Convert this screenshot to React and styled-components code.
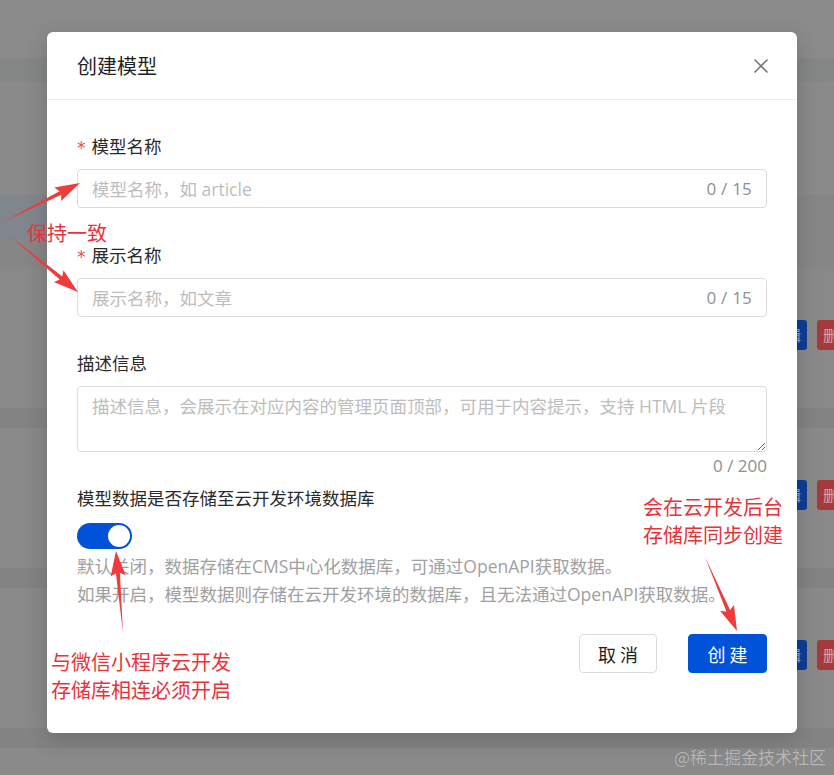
import React from "react";
import styled, { createGlobalStyle } from "styled-components";

const Global = createGlobalStyle`
  html, body { margin: 0; padding: 0; }
  body {
    width: 834px; height: 775px; overflow: hidden;
    font-family: "Open Sans", "Noto Sans CJK SC", sans-serif;
  }
  * { box-sizing: border-box; }
`;

const Screen = styled.div`
  position: relative;
  width: 834px;
  height: 775px;
  overflow: hidden;
  background: #8a8a8a;
`;

/* ---------- dimmed page behind the dialog ---------- */
const Behind = styled.div`
  display: flex;
  flex-direction: column;
  height: 100%;
`;
const TopBar = styled.div`
  height: 58px;
  background: #8b8b8b;
`;
const SubBar = styled.div`
  height: 24px;
  background: #858686;
`;
const Upper = styled.div`
  height: 186px;
  display: grid;
  grid-template-columns: 47px 1fr 37px;
  grid-template-rows: 113px 45px 1fr;
`;
const Cell = styled.div`
  background: ${(p) => p.$bg || "transparent"};
  grid-column: ${(p) => p.$col || "auto"};
  grid-row: ${(p) => p.$row || "auto"};
`;
const Row = styled.div`
  height: 160px;
  display: flex;
  flex-direction: column;
`;
const RowBody = styled.div`
  flex: 1;
  display: flex;
  justify-content: flex-end;
  align-items: flex-start;
  padding-top: 52px;
  gap: 10px;
  margin-right: -25px;
  background: #898989;
`;
const RowSep = styled.div`
  height: 20px;
  background: #838383;
`;
const DimBtn = styled.div`
  width: 42px;
  height: 30px;
  border-radius: 3px;
  background: ${(p) => (p.$danger ? "#a63a3a" : "#0c3d98")};
  color: rgba(255, 255, 255, 0.55);
  font-size: 15px;
  line-height: 30px;
  text-align: center;
  font-family: "Noto Sans CJK SC", sans-serif;
`;

/* ---------- dialog ---------- */
const Overlay = styled.div`
  position: absolute;
  inset: 0;
  padding: 32px 0 0 47px;
`;
const Modal = styled.div`
  width: 750px;
  height: 701px;
  background: #fff;
  border-radius: 6px;
  box-shadow: 0 6px 22px rgba(0, 0, 0, 0.18);
  display: flex;
  flex-direction: column;
`;
const Header = styled.div`
  height: 68px;
  padding: 0 26px 0 30px;
  display: flex;
  align-items: center;
  justify-content: space-between;
  border-bottom: 1px solid #ededed;
`;
const Title = styled.div`
  font-family: "Noto Sans CJK SC", sans-serif;
  font-size: 20px;
  color: #1f1f1f;
  line-height: 28px;
`;
const Close = styled.button`
  border: 0;
  background: none;
  padding: 0;
  width: 20px;
  height: 20px;
  display: flex;
  color: #7a7a7a;
  cursor: pointer;
`;
const Body = styled.div`
  flex: 1;
  padding: 33px 30px 0 30px;
  display: flex;
  flex-direction: column;
`;
const Field = styled.div`
  display: flex;
  flex-direction: column;
  gap: ${(p) => p.$gap || 10}px;
  margin-bottom: ${(p) => p.$mb || 0}px;
`;
const Label = styled.div`
  font-family: "Noto Sans CJK SC", sans-serif;
  font-size: 17.5px;
  line-height: 26px;
  color: #2a2a2a;
  display: flex;
  align-items: center;
`;
const Star = styled.span`
  color: #e34d59;
  font-size: 17px;
  margin-right: 6px;
  font-family: "DejaVu Sans", sans-serif;
  position: relative;
  top: 2px;
`;
const InputBox = styled.div`
  height: 39px;
  border: 1px solid #dcdcdc;
  border-radius: 4px;
  display: flex;
  align-items: center;
  padding: 0 14px 0 14px;
`;
const Input = styled.input`
  flex: 1;
  border: 0;
  outline: none;
  font-family: "Open Sans", "Noto Sans CJK SC", sans-serif;
  font-size: 17.5px;
  color: #222;
  background: transparent;
  padding: 0;
  &::placeholder { color: #bdbdbd; }
`;
const Counter = styled.span`
  font-family: "Open Sans", sans-serif;
  font-size: 17px;
  color: #8f8f8f;
  letter-spacing: 0.2px;
`;
const TextArea = styled.textarea`
  width: 100%;
  height: 66px;
  border: 1px solid #dcdcdc;
  border-radius: 4px;
  padding: 6px 14px;
  font-family: "Open Sans", "Noto Sans CJK SC", sans-serif;
  font-size: 17.5px;
  line-height: 26px;
  resize: vertical;
  outline: none;
  display: block;
  &::placeholder { color: #bdbdbd; }
`;
const AreaCount = styled.div`
  text-align: right;
  font-family: "Open Sans", sans-serif;
  font-size: 17px;
  line-height: 24px;
  color: #8f8f8f;
  margin-top: 2px;
`;
const Switch = styled.div`
  width: 55px;
  height: 26px;
  border-radius: 13px;
  background: #0052d9;
  display: flex;
  align-items: center;
  justify-content: flex-end;
  padding: 0 2px;
`;
const Knob = styled.div`
  width: 22px;
  height: 22px;
  border-radius: 50%;
  background: #fff;
`;
const Help = styled.div`
  font-family: "Open Sans", "Noto Sans CJK SC", sans-serif;
  font-size: 17.5px;
  line-height: 28px;
  color: #a0a0a0;
  margin-top: 3px;
`;
const Footer = styled.div`
  display: flex;
  justify-content: flex-end;
  gap: 31px;
  margin-top: 26px;
`;
const Button = styled.button`
  height: 39px;
  width: ${(p) => (p.$primary ? 79 : 78)}px;
  border-radius: 4px;
  border: 1px solid ${(p) => (p.$primary ? "#0052d9" : "#dcdcdc")};
  background: ${(p) => (p.$primary ? "#0052d9" : "#fff")};
  color: ${(p) => (p.$primary ? "#fff" : "#1f1f1f")};
  font-family: "Noto Sans CJK SC", sans-serif;
  font-size: 18px;
  letter-spacing: 4px;
  padding: 0 0 0 4px;
  cursor: pointer;
`;

/* ---------- annotations ---------- */
const Notes = styled.svg`
  position: absolute;
  inset: 0;
  pointer-events: none;
`;
const Note = styled.div`
  position: absolute;
  left: ${(p) => p.$x}px;
  top: ${(p) => p.$y}px;
  color: #e8333a;
  font-family: "Noto Sans CJK SC", sans-serif;
  font-size: 20px;
  line-height: 28px;
  white-space: nowrap;
  pointer-events: none;
`;
const Watermark = styled.div`
  position: absolute;
  right: 8px;
  bottom: 6px;
  font-family: "Noto Sans CJK SC", sans-serif;
  font-size: 17px;
  color: #b7b7b7;
  text-shadow: 0 0 1px rgba(0, 0, 0, 0.15);
`;

function arrowPoints(tx, ty, px, py, hl = 22, hw = 15, sw = 4) {
  const dx = px - tx, dy = py - ty;
  const len = Math.hypot(dx, dy);
  const ux = dx / len, uy = dy / len;
  const nx = -uy, ny = ux;
  const bx = px - ux * hl, by = py - uy * hl;
  const wx = bx - ux * 3, wy = by - uy * 3;
  const pts = [
    [tx, ty],
    [bx + (nx * sw) / 2, by + (ny * sw) / 2],
    [wx + (nx * hw) / 2, wy + (ny * hw) / 2],
    [px, py],
    [wx - (nx * hw) / 2, wy - (ny * hw) / 2],
    [bx - (nx * sw) / 2, by - (ny * sw) / 2],
  ];
  return pts.map((p) => p.join(",")).join(" ");
}

const arrows = [
  [3, 222, 80, 183],
  [10, 236, 78, 292],
  [123, 633, 116, 551],
  [705, 557, 737, 631],
];

export default function App() {
  return (
    <Screen>
      <Global />
      <Behind>
        <TopBar />
        <SubBar />
        <Upper>
          <Cell $col="1 / 4" $row="1" $bg="#8a8a8a" />
          <Cell $col="1" $row="2" $bg="#80868c" />
          <Cell $col="2 / 4" $row="2" $bg="#868686" />
          <Cell $col="1 / 4" $row="3" $bg="#868686" />
        </Upper>
        {[0, 1, 2].map((i) => (
          <Row key={i}>
            <RowBody>
              <DimBtn>编辑</DimBtn>
              <DimBtn $danger>删除</DimBtn>
            </RowBody>
            <RowSep />
          </Row>
        ))}
      </Behind>

      <Overlay>
        <Modal>
          <Header>
            <Title>创建模型</Title>
            <Close aria-label="close">
              <svg width="20" height="20" viewBox="0 0 20 20">
                <path d="M3.5 3.5 L16.5 16.5 M16.5 3.5 L3.5 16.5" stroke="currentColor" strokeWidth="1.6" fill="none" />
              </svg>
            </Close>
          </Header>
          <Body>
            <Field $mb={34}>
              <Label><Star>*</Star>模型名称</Label>
              <InputBox>
                <Input placeholder="模型名称，如 article" />
                <Counter>0 / 15</Counter>
              </InputBox>
            </Field>
            <Field $mb={33}>
              <Label><Star>*</Star>展示名称</Label>
              <InputBox>
                <Input placeholder="展示名称，如文章" />
                <Counter>0 / 15</Counter>
              </InputBox>
            </Field>
            <Field $mb={7}>
              <Label>描述信息</Label>
              <div>
                <TextArea placeholder="描述信息，会展示在对应内容的管理页面顶部，可用于内容提示，支持 HTML 片段" />
                <AreaCount>0 / 200</AreaCount>
              </div>
            </Field>
            <Field $gap={12}>
              <Label>模型数据是否存储至云开发环境数据库</Label>
              <div>
                <Switch><Knob /></Switch>
                <Help>
                  默认关闭，数据存储在CMS中心化数据库，可通过OpenAPI获取数据。
                  <br />
                  如果开启，模型数据则存储在云开发环境的数据库，且无法通过OpenAPI获取数据。
                </Help>
              </div>
            </Field>
            <Footer>
              <Button>取消</Button>
              <Button $primary>创建</Button>
            </Footer>
          </Body>
        </Modal>
      </Overlay>

      <Notes width="834" height="775" viewBox="0 0 834 775">
        {arrows.map((a, i) => (
          <polygon key={i} points={arrowPoints(...a)} fill="#ee3b3b" />
        ))}
      </Notes>
      <Note $x={27} $y={219}>保持一致</Note>
      <Note $x={643} $y={493}>会在云开发后台<br />存储库同步创建</Note>
      <Note $x={51} $y={648}>与微信小程序云开发<br />存储库相连必须开启</Note>
      <Watermark>@稀土掘金技术社区</Watermark>
    </Screen>
  );
}
